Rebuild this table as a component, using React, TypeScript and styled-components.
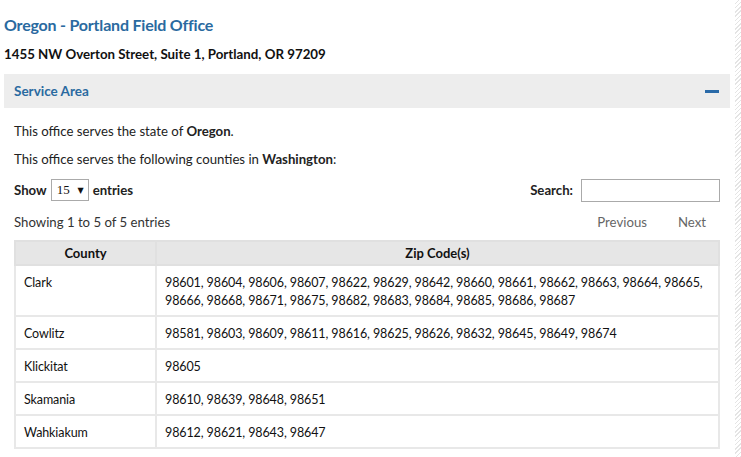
import React from "react";
import styled, { createGlobalStyle } from "styled-components";

const Global = createGlobalStyle`
  html, body { margin: 0; padding: 0; }
  body {
    font-family: Lato, "Noto Sans", sans-serif;
    color: #111;
    background-color: #fff;
    background-image: repeating-linear-gradient(135deg, #e4e4e4 0 1px, #fff 1px 3px);
  }
`;

const Page = styled.div`
  width: 735px;
  min-height: 457px;
  background: #fff;
  box-sizing: border-box;
  padding: 0 5px 0 4px;
`;

const Title = styled.h2`
  margin: 0;
  padding-top: 13px;
  height: 23px;
  font-size: 16px;
  letter-spacing: -0.2px;
  line-height: 23px;
  font-weight: 700;
  color: #2a6aa0;
`;

const Address = styled.div`
  margin-top: 8px;
  height: 20px;
  font-size: 13.3px;
  line-height: 20px;
  font-weight: 700;
  color: #111;
`;

const PanelHeader = styled.div`
  margin-top: 10px;
  height: 34px;
  background: #ededed;
  display: flex;
  align-items: center;
  justify-content: space-between;
  padding: 0 11px 0 10px;
  font-size: 13.5px;
  font-weight: 700;
  color: #2a6aa0;
`;

const Minus = styled.span`
  width: 14px;
  height: 3px;
  background: #2a6aa8;
`;

const PanelBody = styled.div`
  padding: 14px 10px 0 10px;
  font-size: 13.2px;
  color: #222;
`;

const Para = styled.p`
  margin: 0 0 10px 0;
  line-height: 18px;
`;

const Controls = styled.div`
  display: flex;
  justify-content: space-between;
  align-items: center;
  height: 24px;
`;

const Label = styled.label`
  display: flex;
  align-items: center;
  font-weight: 700;
  color: #222;
  gap: 3px;
`;

const FakeSelect = styled.span`
  display: inline-flex;
  align-items: center;
  box-sizing: border-box;
  height: 22px;
  width: 38px;
  border: 1px solid #aaa;
  padding: 0 4px 0 5px;
  font-family: "Liberation Serif", serif;
  font-weight: 400;
  font-size: 13px;
  color: #111;
  justify-content: space-between;
  margin: 0 1px;
  background: #fff;
`;

const Caret = styled.span`
  font-size: 8px;
  font-family: "DejaVu Sans", sans-serif;
`;

const SearchInput = styled.input`
  box-sizing: border-box;
  width: 139px;
  height: 23px;
  border: 1px solid #aaa;
  margin-left: 5px;
  padding: 0 4px;
`;

const InfoRow = styled.div`
  display: flex;
  justify-content: space-between;
  align-items: center;
  margin-top: 9px;
  height: 22px;
`;

const Info = styled.div`
  color: #333;
`;

const Pager = styled.div`
  display: flex;
  gap: 31px;
  padding-right: 14px;
  color: #666;
`;

const Table = styled.table`
  margin-top: 7px;
  width: 100%;
  table-layout: fixed;
  border-collapse: collapse;
  border: 2px solid #e0e0e0;
  font-size: 12.5px;
  letter-spacing: -0.1px;
  color: #111;
`;

const Th = styled.th`
  background: #e6e6e6;
  border: 2px solid #e0e0e0;
  height: 22px;
  padding: 0 8px;
  font-weight: 700;
  font-size: 13px;
  letter-spacing: 0;
  text-align: center;
`;

const Td = styled.td`
  border: 2px solid #e8e8e8;
  padding: 8px 8px 5px 8px;
  line-height: 18px;
  vertical-align: top;
`;

const rows: [string, string][] = [
  [
    "Clark",
    "98601, 98604, 98606, 98607, 98622, 98629, 98642, 98660, 98661, 98662, 98663, 98664, 98665, 98666, 98668, 98671, 98675, 98682, 98683, 98684, 98685, 98686, 98687",
  ],
  ["Cowlitz", "98581, 98603, 98609, 98611, 98616, 98625, 98626, 98632, 98645, 98649, 98674"],
  ["Klickitat", "98605"],
  ["Skamania", "98610, 98639, 98648, 98651"],
  ["Wahkiakum", "98612, 98621, 98643, 98647"],
];

export default function App() {
  return (
    <>
      <Global />
      <Page>
        <Title>Oregon - Portland Field Office</Title>
        <Address>1455 NW Overton Street, Suite 1, Portland, OR 97209</Address>
        <PanelHeader>
          <span>Service Area</span>
          <Minus />
        </PanelHeader>
        <PanelBody>
          <Para>
            This office serves the state of <b>Oregon</b>.
          </Para>
          <Para>
            This office serves the following counties in <b>Washington</b>:
          </Para>
          <Controls>
            <Label>
              Show
              <FakeSelect>
                15 <Caret>▼</Caret>
              </FakeSelect>
              entries
            </Label>
            <Label>
              Search:
              <SearchInput type="text" />
            </Label>
          </Controls>
          <InfoRow>
            <Info>Showing 1 to 5 of 5 entries</Info>
            <Pager>
              <span>Previous</span>
              <span>Next</span>
            </Pager>
          </InfoRow>
          <Table>
            <colgroup>
              <col style={{ width: 141 }} />
              <col />
            </colgroup>
            <thead>
              <tr>
                <Th>County</Th>
                <Th>Zip Code(s)</Th>
              </tr>
            </thead>
            <tbody>
              {rows.map(([c, z]) => (
                <tr key={c}>
                  <Td>{c}</Td>
                  <Td>{z}</Td>
                </tr>
              ))}
            </tbody>
          </Table>
        </PanelBody>
      </Page>
    </>
  );
}
